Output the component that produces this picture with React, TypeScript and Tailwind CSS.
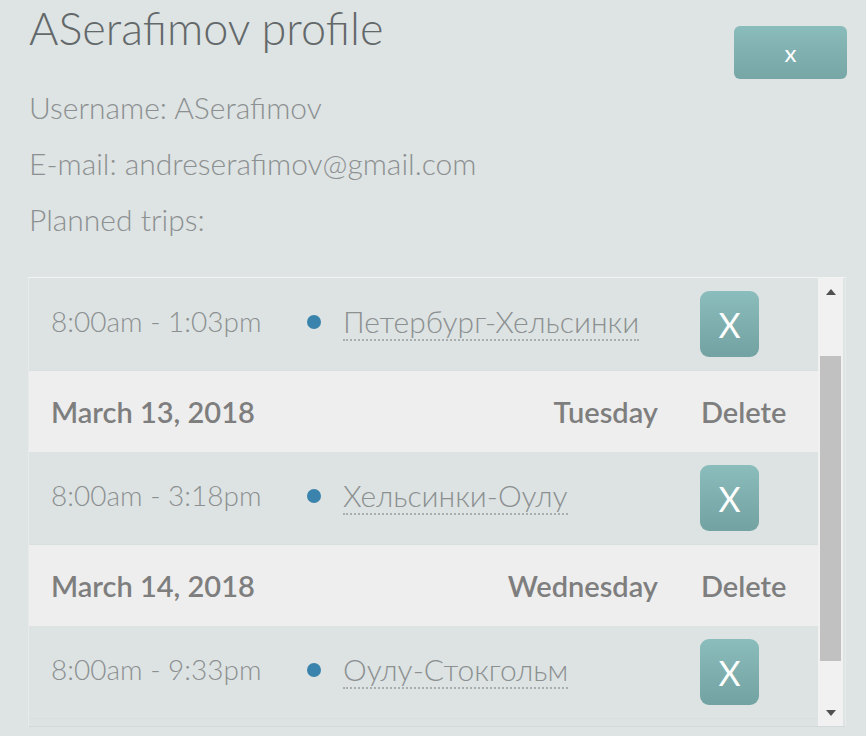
import React from "react";

const trips = [
  { time: "8:00am - 1:03pm", route: "Петербург-Хельсинки" },
  { date: "March 13, 2018", day: "Tuesday" },
  { time: "8:00am - 3:18pm", route: "Хельсинки-Оулу" },
  { date: "March 14, 2018", day: "Wednesday" },
  { time: "8:00am - 9:33pm", route: "Оулу-Стокгольм" },
];

function TripRow({ time, route }: { time: string; route: string }) {
  return (
    <div className="flex h-[93px] shrink-0 items-center border-b border-[#d9dede] bg-[#dde3e3]">
      <div className="mb-[7px] w-[278px] pl-[22px] text-[28px] font-light text-[#8c9091]">{time}</div>
      <div className="mb-[4px] flex w-[371px] items-center">
        <span className="h-[14px] w-[14px] rounded-full bg-[#3a83ad]" />
        <span className="ml-[22px] border-b-2 border-dotted border-[#a9adae] text-[30px] font-light leading-[36px] text-[#8c9091]">
          {route}
        </span>
      </div>
      <div className="pl-[22px]">
        <button className="flex h-[66px] w-[59px] items-center justify-center rounded-[9px] bg-gradient-to-b from-[#8bbdbc] to-[#72a2a1] text-[34px] font-normal text-white">
          X
        </button>
      </div>
    </div>
  );
}

function DateRow({ date, day }: { date: string; day: string }) {
  return (
    <div className="flex h-[81px] shrink-0 items-center bg-[#eeeeee] text-[29px] font-semibold text-[#7e7e7e]">
      <div className="w-[300px] pl-[22px]">{date}</div>
      <div className="w-[329px] text-right">{day}</div>
      <div className="pl-[43px]">Delete</div>
    </div>
  );
}

export default function App() {
  return (
    <div
      className="relative h-[736px] w-[866px] overflow-hidden bg-[#dee3e3]"
      style={{ fontFamily: "Lato, 'Open Sans', sans-serif" }}
    >
      <div className="flex items-start justify-between pl-[29px] pr-[19px]">
        <h1 className="mt-[0px] text-[45px] font-light leading-[56px] text-[#63686a]">ASerafimov profile</h1>
        <button className="mt-[26px] flex h-[53px] w-[113px] items-center justify-center rounded-[6px] bg-gradient-to-b from-[#8abcbb] to-[#76a6a5] text-[24px] leading-none text-white">
          x
        </button>
      </div>
      <div className="flex flex-col pl-[29px] text-[30px] font-light leading-[56px] text-[#8c9091]">
        <div>Username: ASerafimov</div>
        <div>E-mail: andreserafimov@gmail.com</div>
        <div>Planned trips:</div>
      </div>
      <div className="ml-[28px] mt-[30px] flex h-[450px] w-[818px] overflow-hidden border border-t-[#f2f4f4] border-l-[#e6eaea] border-r-[#e6eaea] border-b-[#d3d8d8]">
        <div className="flex w-[789px] flex-col bg-[#dde3e3]">
          <TripRow time={trips[0].time!} route={trips[0].route!} />
          <DateRow date={trips[1].date!} day={trips[1].day!} />
          <TripRow time={trips[2].time!} route={trips[2].route!} />
          <DateRow date={trips[3].date!} day={trips[3].day!} />
          <TripRow time={trips[4].time!} route={trips[4].route!} />
        </div>
        <div className="flex w-[25px] flex-col bg-[#f1f1f1]">
          <div className="flex h-[28px] items-center justify-center">
            <svg width="10" height="6" viewBox="0 0 10 6">
              <path d="M0 6 L5 0 L10 6 Z" fill="#505050" />
            </svg>
          </div>
          <div className="h-[50px]" />
          <div className="mx-[2px] h-[305px] bg-[#c1c1c1]" />
          <div className="flex flex-1 items-end justify-center pb-[10px]">
            <svg width="10" height="6" viewBox="0 0 10 6">
              <path d="M0 0 L5 6 L10 0 Z" fill="#505050" />
            </svg>
          </div>
        </div>
      </div>
    </div>
  );
}
